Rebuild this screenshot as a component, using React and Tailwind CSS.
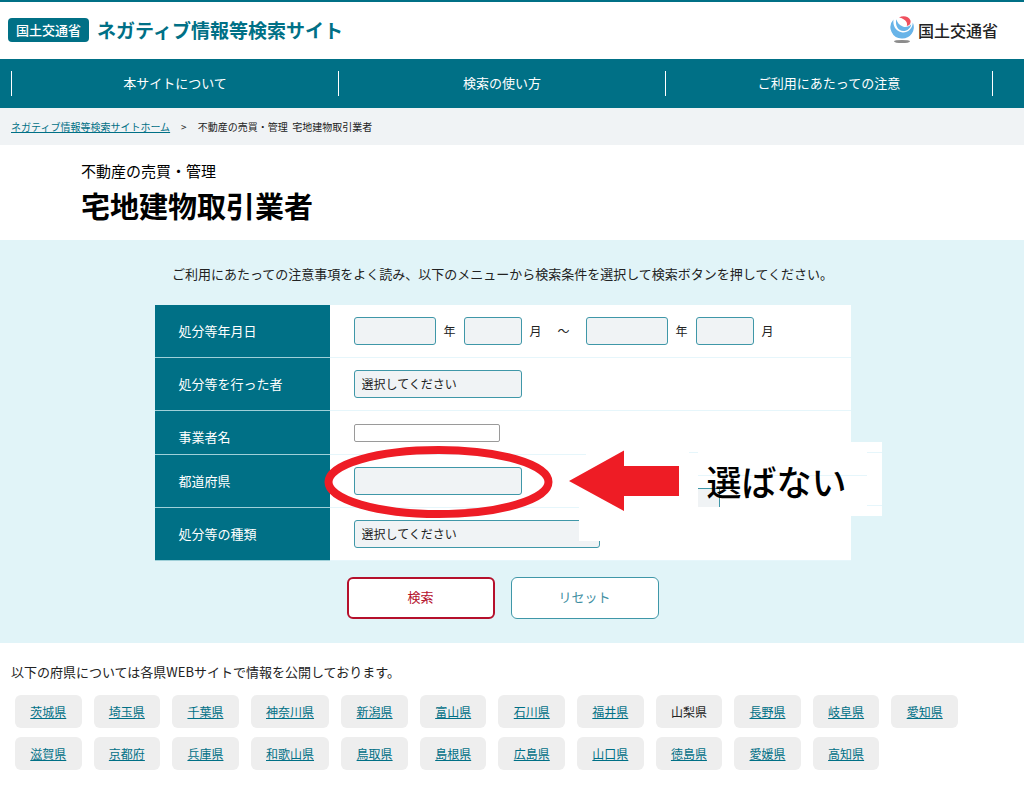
import clsx from 'clsx';

const navItems = ['本サイトについて', '検索の使い方', 'ご利用にあたっての注意'];

const prefectures = [
    '茨城県', '埼玉県', '千葉県', '神奈川県', '新潟県', '富山県', '石川県', '福井県', '山梨県', '長野県', '岐阜県', '愛知県',
    '滋賀県', '京都府', '兵庫県', '和歌山県', '鳥取県', '島根県', '広島県', '山口県', '徳島県', '愛媛県', '高知県',
];

function MinistryLogo() {
    return (
        <svg viewBox="0 0 24 28" className="h-7 w-6" aria-hidden="true">
            <path d="M3.500 3.500A11.300 11.300 0 0 0 12 22.500A11.300 11.300 0 0 0 22.800 6.500C22.500 13 17.500 17 12.500 16.500C6.500 16 2.500 10.500 3.500 3.500z" fill="#68b4e8" />
            <path d="M6.300 3.200C4.800 9.500 8.300 15 13.300 15C17.500 15 20.700 12 21.200 8.200C19 10.800 15.500 11.600 12.800 10.400C9.500 9.200 7.200 6.500 6.300 3.200z" fill="#68b4e8" />
            <path d="M9 1.600C13-.8 18.700.2 20.400 4.300C21.300 7.300 19.500 9.800 16.700 10C17.700 7.500 16.500 4.800 13.500 3.200C12 2.400 10.500 1.900 9 1.600z" fill="#f0505e" />
            <ellipse cx="12" cy="25.500" rx="8" ry="1.600" fill="#8c8c8c" />
        </svg>
    );
}

function SelectBox({ label, className, children }) {
    return (
        <select
            aria-label={label}
            className={clsx('h-7 appearance-none rounded-[3px] border border-[#3f97a8] bg-[#f0f3f5] px-[7px] text-xs', className)}
        >
            {children}
        </select>
    );
}

function Row({ title, htmlFor, short, children }) {
    return (
        <tr className={short ? 'h-11' : 'h-[53px]'}>
            <th scope="row" className={clsx('w-[175px] border-b border-[#9fd0d9] bg-[#007086] pl-6 text-left font-normal text-white', short && 'pt-2')}>
                <label htmlFor={htmlFor}>{title}</label>
            </th>
            <td className="border-b border-[#e6f6fb] bg-white pl-6">{children}</td>
        </tr>
    );
}

// Red marks drawn over the form: ring, arrow and note
function Annotation() {
    return (
        <div className="pointer-events-none absolute top-0 left-0">
            <svg width="728" height="256" viewBox="155 305 728 256" className="max-w-none" aria-hidden="true">
                <path d="M586 443H690V541H579V500H586z" fill="#fff" />
                <path d="M689 442H882V516H689z" fill="#fff" />
                <path d="M689 452.500H698M867 452.500H882M698 475.500H867M867 505.500H882" stroke="#e6f6fb" />
                <path d="M698 488H719V507H698z" fill="#f0f3f5" />
                <path d="M698 488.500H719.500V507" fill="none" stroke="#3f97a8" />
                <ellipse cx="438.500" cy="482" rx="110" ry="32" fill="none" stroke="#ee1c25" strokeWidth="8" />
                <path d="M569 481L624 450.500V466H679V496H624V511z" fill="#ee1c25" />
            </svg>
            <p className="absolute top-[156px] left-[552px] text-[35px] leading-10 font-medium whitespace-nowrap text-black">選ばない</p>
        </div>
    );
}

export default function App() {
    return (
        <div className="min-h-screen bg-white font-['Noto_Sans_CJK_JP','Liberation_Sans',sans-serif] text-[13px] leading-5 text-[#222]">
            <header className="flex h-[59px] items-center justify-between border-t-2 border-[#007086] pr-[26px] pb-[2px] pl-2">
                <h1 className="flex items-center gap-2 text-[#007086]">
                    <span className="rounded bg-[#007086] px-2 py-[2px] font-medium text-white">国土交通省</span>
                    <a href="#" className="text-[19px] font-bold">ネガティブ情報等検索サイト</a>
                </h1>
                <a href="#" className="flex items-center gap-1 text-base font-medium text-[#222]">
                    <MinistryLogo />
                    国土交通省
                </a>
            </header>

            <nav className="bg-[#007086] py-3 pr-[31px] pl-[11px]">
                <ul className="flex border-l border-white text-white">
                    {navItems.map((item) => (
                        <li key={item} className="h-[25px] flex-1 border-r border-white text-center leading-[23px]">
                            <a href="#">{item}</a>
                        </li>
                    ))}
                </ul>
            </nav>

            <div className="flex h-[37px] items-center bg-[#f0f3f5] px-[11px] text-[10px]">
                <a href="#" className="text-[#007086] underline">ネガティブ情報等検索サイトホーム</a>
                <span className="mx-[11px]">&gt;</span>
                <span>不動産の売買・管理&nbsp; 宅地建物取引業者</span>
            </div>

            <div className="px-[81px] pt-[14px] pb-[13px] text-black">
                <p className="text-[15px] leading-6">不動産の売買・管理</p>
                <h2 className="text-[29px] leading-[44px] font-bold">宅地建物取引業者</h2>
            </div>

            <main className="bg-[#e1f4f8] pt-6 pr-[19px] pb-6">
                <p className="text-center">ご利用にあたっての注意事項をよく読み、以下のメニューから検索条件を選択して検索ボタンを押してください。</p>
                <form className="mx-auto mt-[21px] max-w-[696px]">
                    <div className="relative">
                        <table className="w-full border-separate border-spacing-0">
                            <tbody>
                                <Row title="処分等年月日">
                                    <div className="flex items-center gap-2 text-xs">
                                        <SelectBox label="開始年" className="w-[82px]"><option></option></SelectBox>
                                        年
                                        <SelectBox label="開始月" className="w-[58px]"><option></option></SelectBox>
                                        月
                                        <span className="mx-2">～</span>
                                        <SelectBox label="終了年" className="w-[82px]"><option></option></SelectBox>
                                        年
                                        <SelectBox label="終了月" className="w-[58px]"><option></option></SelectBox>
                                        月
                                    </div>
                                </Row>
                                <Row title="処分等を行った者">
                                    <SelectBox label="処分等を行った者" className="w-[168px]"><option>選択してください</option></SelectBox>
                                </Row>
                                <Row title="事業者名" htmlFor="company" short>
                                    <input id="company" type="text" className="block h-[18px] w-[146px] rounded-[2px] border border-[#9a9a9a] bg-white" />
                                </Row>
                                <Row title="都道府県">
                                    <SelectBox label="都道府県" className="w-[168px]"><option></option></SelectBox>
                                </Row>
                                <Row title="処分等の種類">
                                    <SelectBox label="処分等の種類" className="w-[246px]"><option>選択してください</option></SelectBox>
                                </Row>
                            </tbody>
                        </table>
                        <Annotation />
                    </div>
                    <div className="mt-4 flex justify-center gap-4">
                        <button type="button" className="h-[42px] w-[148px] rounded-md border-2 border-[#b5102c] bg-white pb-[2px] text-[#b5102c]">検索</button>
                        <button type="reset" className="h-[42px] w-[148px] rounded-md border border-[#3f97a8] bg-white pb-[2px] text-[#3f8fa2]">リセット</button>
                    </div>
                </form>
            </main>

            <section className="px-[11px] pt-[19px]">
                <p>以下の府県については各県WEBサイトで情報を公開しております。</p>
                <ul className="mt-[13px] ml-1 grid max-w-[943px] grid-cols-[repeat(12,auto)] gap-x-3 gap-y-[9px] text-xs">
                    {prefectures.map((name) => (
                        <li key={name} className="rounded-md bg-[#eee] px-[15px] text-center leading-[33px] whitespace-nowrap">
                            {name === '山梨県' ? name : <a href="#" className="text-[#007086] underline">{name}</a>}
                        </li>
                    ))}
                </ul>
            </section>
        </div>
    );
}
